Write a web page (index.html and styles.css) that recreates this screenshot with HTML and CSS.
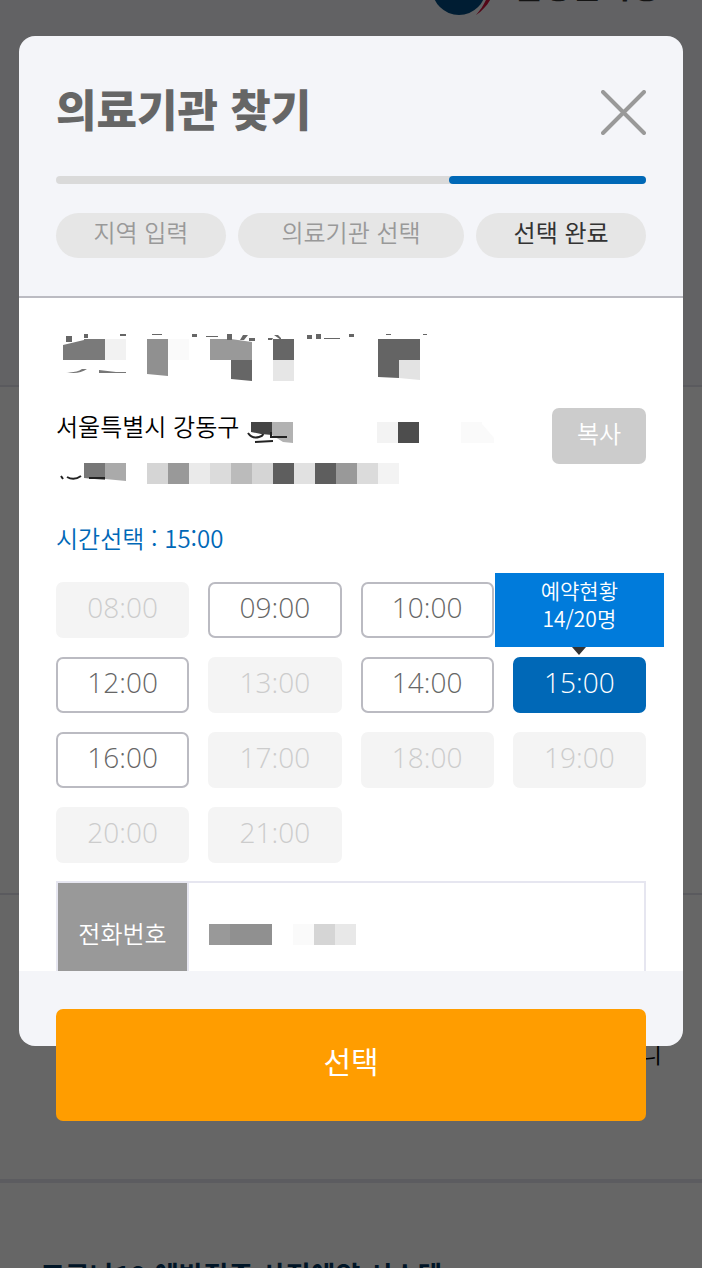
FILE: index.html
```html
<!DOCTYPE html>
<html lang="ko">
<head>
    <meta charset="UTF-8">
    <meta name="viewport" content="width=device-width, initial-scale=1">
    <title>의료기관 찾기</title>
    <link rel="stylesheet" href="styles.css">
</head>
<body>

<div class="screen">
    <div class="page">
        <header class="page-header">
            <svg class="logo" viewBox="0 0 64 64" aria-hidden="true">
                <circle cx="26" cy="32" r="27" fill="#004a80"/>
                <path d="M55 8C61 30 54 47 43 59C55 51 63 38 63 20Z" fill="#d0103a"/>
            </svg>
            <span class="org-name">질병관리청</span>
        </header>
        <section class="page-section"></section>
        <section class="page-section page-note"><p>니</p></section>
        <section class="page-section page-bottom">
            <h2>코로나19 예방접종 사전예약 시스템</h2>
        </section>
    </div>

    <div class="overlay">
        <div class="modal" role="dialog" aria-labelledby="modal-title">
            <div class="modal-header">
                <div class="title-row">
                    <h1 id="modal-title">의료기관 찾기</h1>
                    <button type="button" class="close-btn" aria-label="닫기">
                        <svg viewBox="0 0 45 45" aria-hidden="true">
                            <path d="M2 2L43 43M43 2L2 43" fill="none" stroke="#999" stroke-width="4" stroke-linecap="round"/>
                        </svg>
                    </button>
                </div>
                <div class="progress"><div class="progress-bar"></div></div>
                <ol class="steps">
                    <li>지역 입력</li>
                    <li>의료기관 선택</li>
                    <li class="active">선택 완료</li>
                </ol>
            </div>

            <div class="modal-body">
                <svg class="mosaic mosaic-name" viewBox="0 0 390 60" aria-hidden="true">
                    <path d="M7 17L28 12V11H49V32H7Z" fill="#7a7a7a"/>
                    <path d="M49 11H70V32H49Z" fill="#f2f2f2"/>
                    <path d="M91 11H112V48L91 46Z" fill="#909090"/>
                    <path d="M112 11H133V32H112Z" fill="#fafafa"/>
                    <path d="M154 11H175L196 14V32H154Z" fill="#999"/>
                    <path d="M175 32H196V53L175 51ZM217 11H238V32H217Z" fill="#666"/>
                    <path d="M217 32H238V53H217Z" fill="#e6e6e6"/>
                    <path d="M322 11H364V32H343V50L322 49Z" fill="#646464"/>
                    <path d="M343 32H364V52L343 50Z" fill="#e3e3e3"/>
                    <path d="M10 8H16V14H10ZM28 6H32V10H28ZM64 6H70V8H64ZM96 6H106V7H96ZM136 6H141V9H136ZM150 8H162V9H150ZM171 6H176V12H171ZM193 10H199V13H193ZM251 7H256V11H251ZM260 6H265V11H260ZM268 10H284V11H268ZM293 6H298V9H293ZM330 6H335V7H330ZM367 6H371V7H367Z" fill="#666"/>
                    <path d="M184 12L187 7H192L188 12ZM212 12V10H217L216 12ZM218 7H222L225 10V12Z" fill="#666"/>
                    <path d="M10 44Q22 47 31 41L26 41Q20 45 10 44ZM43 42L60 44H70V45H43Z" fill="#777"/>
                </svg>

                <div class="address-row">
                    <div class="address">
                        <div class="address-line">
                            <span>서울특별시 강동구</span>
                            <svg class="mosaic mosaic-road" viewBox="0 0 260 46" aria-hidden="true">
                                <path d="M12 18H33V31L22 30L12 28Z" fill="#444"/>
                                <path d="M33 18H54V39L44 38L33 31Z" fill="#b2b2b2"/>
                                <path d="M138 18H159V39H138Z" fill="#f3f3f3"/>
                                <path d="M159 18H180V39H159Z" fill="#4d4d4d"/>
                                <path d="M222 18H243V39H222ZM243 20L255 34V39H243Z" fill="#fafafa"/>
                                <path d="M9 29Q13 35 20 33Q24 32 24 30M32 28V33H48M16 38L34 37" fill="none" stroke="#222" stroke-width="2"/>
                            </svg>
                        </div>
                        <svg class="mosaic mosaic-detail" viewBox="0 0 350 46" aria-hidden="true">
                            <path d="M28 13H49V30L28 28Z" fill="#777"/>
                            <path d="M49 13H70V31L49 29Z" fill="#aaa"/>
                            <path d="M91 13H112V34H91ZM196 13H217V34H196Z" fill="#d5d5d5"/>
                            <path d="M112 13H133V34H112ZM280 13H301V34H280Z" fill="#999"/>
                            <path d="M133 13H154V34H133Z" fill="#eaeaea"/>
                            <path d="M154 13H175V34H154ZM301 13H322V34H301Z" fill="#dbdbdb"/>
                            <path d="M175 13H196V34H175Z" fill="#bbb"/>
                            <path d="M217 13H238V34H217ZM259 13H280V34H259Z" fill="#5e5e5e"/>
                            <path d="M238 13H259V34H238Z" fill="#e1e1e1"/>
                            <path d="M322 13H343V34H322Z" fill="#f3f3f3"/>
                            <path d="M5 26L7 29M11 27Q18 31 25 26M34 27V28H49" fill="none" stroke="#222" stroke-width="2"/>
                        </svg>
                    </div>
                    <button type="button" class="copy-btn">복사</button>
                </div>

                <p class="selected-time">시간선택 : 15:00</p>

                <div class="time-grid">
                    <button type="button" class="time" disabled>08:00</button>
                    <button type="button" class="time">09:00</button>
                    <button type="button" class="time">10:00</button>
                    <span></span>
                    <button type="button" class="time">12:00</button>
                    <button type="button" class="time" disabled>13:00</button>
                    <button type="button" class="time">14:00</button>
                    <div class="time-cell">
                        <button type="button" class="time selected" aria-describedby="status">15:00</button>
                        <div class="tooltip" id="status" role="tooltip">예약현황<br>14/20명</div>
                    </div>
                    <button type="button" class="time">16:00</button>
                    <button type="button" class="time" disabled>17:00</button>
                    <button type="button" class="time" disabled>18:00</button>
                    <button type="button" class="time" disabled>19:00</button>
                    <button type="button" class="time" disabled>20:00</button>
                    <button type="button" class="time" disabled>21:00</button>
                </div>

                <table class="info-table">
                    <tr>
                        <th scope="row">전화번호</th>
                        <td>
                            <svg class="mosaic mosaic-phone" viewBox="0 0 147 21" aria-hidden="true">
                                <path d="M0 0H21V21H0Z" fill="#999"/>
                                <path d="M21 0H63V21H21Z" fill="#909090"/>
                                <path d="M84 0H105V21H84Z" fill="#fafafa"/>
                                <path d="M105 0H126V21H105Z" fill="#d5d5d5"/>
                                <path d="M126 0H147V21H126Z" fill="#e8e8e8"/>
                            </svg>
                        </td>
                    </tr>
                </table>
            </div>

            <div class="modal-footer">
                <button type="button" class="submit-btn">선택</button>
            </div>
        </div>
    </div>
</div>

</body>
</html>
```
FILE: styles.css
```css
* {
    box-sizing: border-box;
}
body {
    margin: 0;
    background: #fff;
    color: #000;
    font-family: "Noto Sans CJK KR", sans-serif;
    font-size: 24px;
    font-weight: 350;
}
h1, h2, p, ol {
    margin: 0;
    padding: 0;
}
button {
    padding: 0;
    border: 0;
    font: inherit;
    cursor: pointer;
}

/* page behind the dialog */
.screen {
    position: relative;
    height: calc(100vh - 12px);
    overflow: hidden;
}
.page {
    margin-top: -60px;
    background: #fff;
}
.page-header {
    display: flex;
    align-items: flex-start;
    justify-content: flex-end;
    gap: 16px;
    height: 445px;
    padding: 16px 42px;
    background: #f4f5f9;
}
.logo {
    width: 64px;
    height: 64px;
}
.org-name {
    color: #333;
    font-size: 32px;
    font-weight: 700;
    line-height: 56px;
}
.page-section {
    height: 508px;
    border-top: 2px solid #e0e0ea;
}
.page-note {
    height: 286px;
    padding: 140px 40px 0;
    text-align: right;
}
.page-bottom {
    padding: 74px 40px 0;
    border-top: 4px solid #e6e6f0;
}
.page-bottom h2 {
    color: #00355f;
    font-size: 27px;
    font-weight: 700;
    line-height: 36px;
}

/* dialog */
.overlay {
    position: absolute;
    inset: 0;
    display: flex;
    padding: 36px 19px 222px;
    background: rgba(0, 0, 0, 0.6);
}
.modal {
    display: flex;
    flex: 1;
    flex-direction: column;
    min-width: 0;
    border-radius: 16px;
    background: #f4f5f9;
}
.modal-header {
    padding: 42px 37px 38px;
    border-bottom: 2px solid #bbbbc2;
}
.title-row {
    display: flex;
    align-items: center;
    justify-content: space-between;
    height: 68px;
    margin-bottom: 30px;
}
.title-row h1 {
    padding-bottom: 8px;
    color: #666;
    font-size: 44px;
    font-weight: 900;
    line-height: 60px;
}
.close-btn {
    width: 45px;
    height: 45px;
    background: none;
}
.close-btn svg {
    display: block;
}
.progress {
    height: 8px;
    margin-bottom: 29px;
    border-radius: 4px;
    background: #dadada;
}
.progress-bar {
    width: 33.4%;
    height: 8px;
    margin-left: auto;
    border-radius: 4px;
    background: #0068b7;
}
.steps {
    display: grid;
    grid-template-columns: 3fr 4fr 3fr;
    gap: 12px;
    list-style: none;
}
.steps li {
    height: 45px;
    border-radius: 23px;
    background: #e6e6e6;
    color: #999;
    line-height: 38px;
    text-align: center;
}
.steps .active {
    color: #333;
    font-weight: 400;
}

.modal-body {
    flex: 1;
    min-height: 0;
    padding: 30px 37px 0;
    overflow: hidden;
    background: #fff;
}
.mosaic {
    display: block;
    flex: none;
}
.mosaic-name {
    width: 390px;
    height: 60px;
    margin-bottom: 16px;
}
.address-row {
    display: flex;
    justify-content: space-between;
    margin-bottom: 24px;
}
.address {
    min-width: 0;
}
.address-line {
    display: flex;
    height: 46px;
    line-height: 44px;
    white-space: nowrap;
}
.mosaic-road {
    width: 260px;
    height: 46px;
}
.mosaic-detail {
    width: 350px;
    height: 46px;
}
.copy-btn {
    flex: none;
    width: 94px;
    height: 56px;
    margin-top: 4px;
    padding-bottom: 8px;
    border-radius: 7px;
    background: #ccc;
    color: #fff;
}
.selected-time {
    margin-bottom: 26px;
    color: #0068b7;
    line-height: 36px;
}

.time-grid {
    display: grid;
    grid-template-columns: repeat(4, 1fr);
    gap: 19px;
    margin-bottom: 18px;
}
.time {
    width: 100%;
    height: 56px;
    padding-bottom: 6px;
    border: 2px solid #bbbbc2;
    border-radius: 7px;
    background: #fff;
    color: #666;
    font-family: "Open Sans", "Noto Sans CJK KR", sans-serif;
    font-size: 28px;
    line-height: 40px;
}
.time:disabled {
    border-color: #f4f4f4;
    background: #f4f4f4;
    color: #ccc;
}
.time.selected {
    border-color: #0068b7;
    background: #0068b7;
    color: #fff;
}
.time-cell {
    position: relative;
}
.tooltip {
    position: absolute;
    right: -18px;
    bottom: calc(100% + 10px);
    left: -18px;
    height: 74px;
    padding-top: 3px;
    background: #007bdb;
    color: #fff;
    font-size: 21px;
    line-height: 28px;
    text-align: center;
}
.tooltip::after {
    content: "";
    position: absolute;
    top: 100%;
    left: 50%;
    border: 7px solid transparent;
    border-top: 8px solid #333;
    border-bottom: 0;
    transform: translateX(-50%);
}

.info-table {
    width: 100%;
    border-collapse: collapse;
}
.info-table th,
.info-table td {
    height: 104px;
    padding: 0 20px;
    border: 2px solid #e6e6f0;
}
.info-table th {
    width: 131px;
    padding-bottom: 4px;
    background: #999;
    color: #fff;
    font-weight: 350;
    white-space: nowrap;
}
.mosaic-phone {
    width: 147px;
    height: 21px;
}

.modal-footer {
    height: 75px;
    padding: 38px 37px 0;
}
.submit-btn {
    width: 100%;
    height: 112px;
    padding-bottom: 10px;
    border-radius: 7px;
    background: #ff9d00;
    color: #fff;
    font-size: 30px;
    font-weight: 400;
}
```
